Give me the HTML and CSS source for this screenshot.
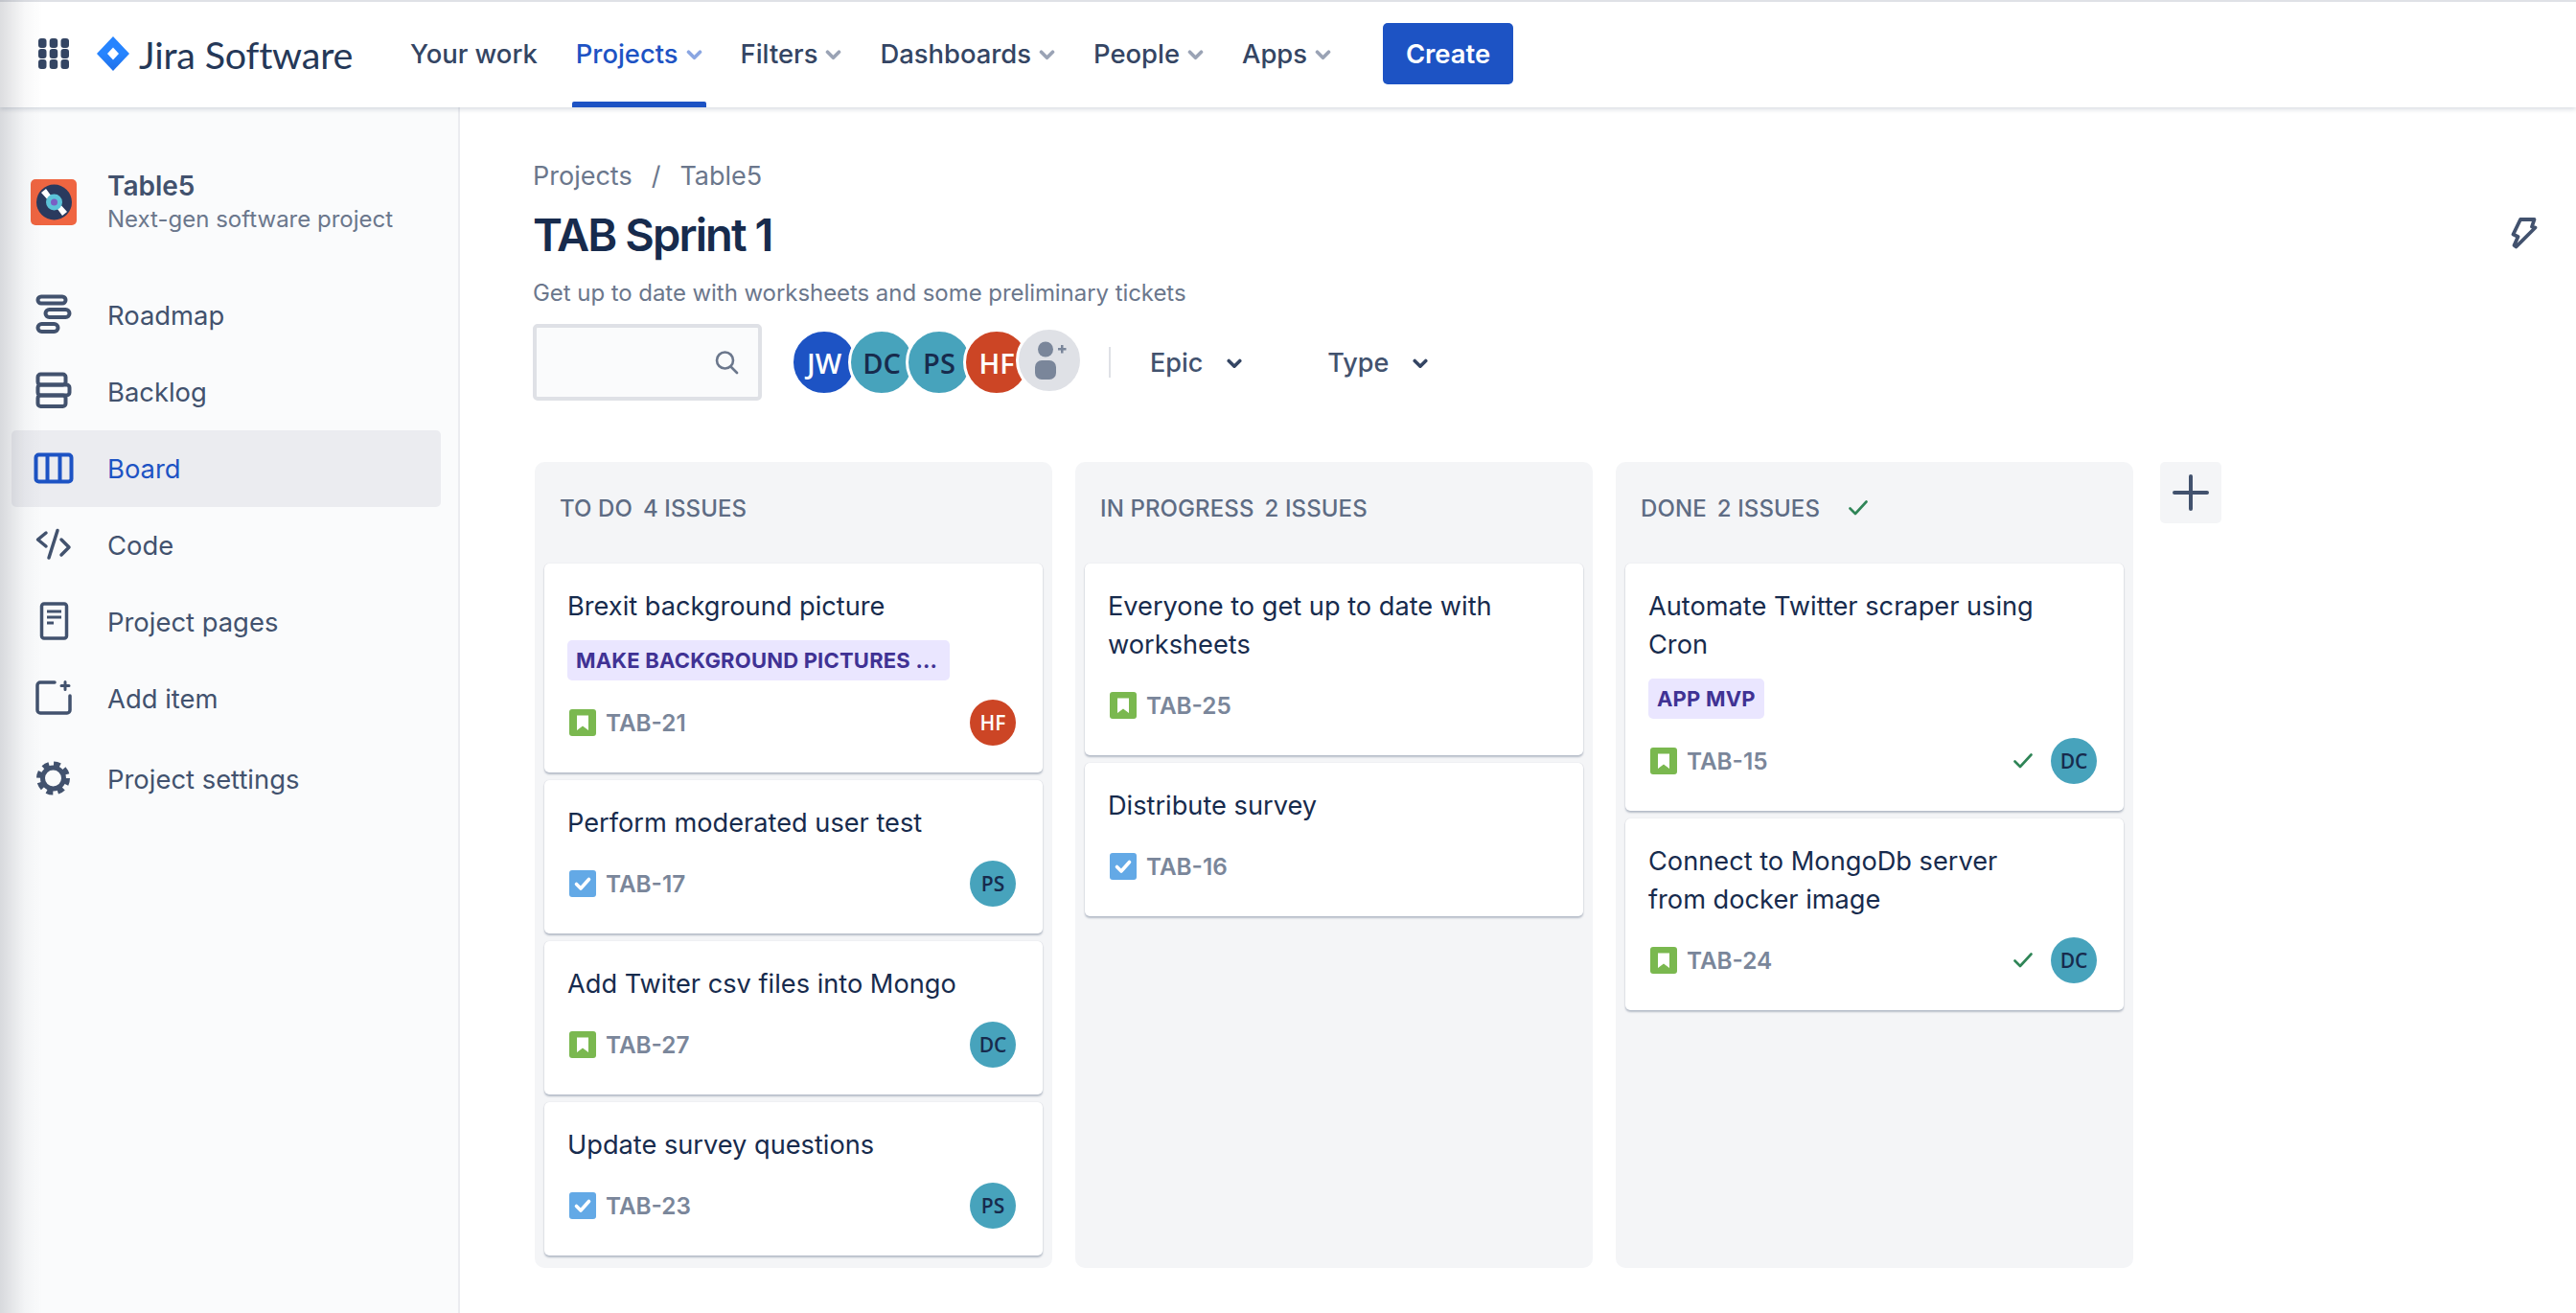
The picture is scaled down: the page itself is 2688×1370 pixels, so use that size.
FILE: index.html
```html
<!DOCTYPE html>
<html lang="en">
<head>
  <meta charset="UTF-8">
  <title>TAB Sprint 1 - Board</title>
  <link rel="stylesheet" href="styles.css">
</head>
<body>
  <svg class="sprite" width="0" height="0">
    <symbol id="chev" viewBox="0 0 18 12"><path d="M2.500 2.500 9 9l6.500-6.500" fill="none" stroke="currentColor" stroke-width="4" stroke-linecap="round" stroke-linejoin="round"/></symbol>
    <symbol id="story" viewBox="0 0 28 28"><rect width="28" height="28" rx="3" fill="#7ab84f"/><path d="M8 6.500h12v15.500l-6-4.500-6 4.500z" fill="#fff"/></symbol>
    <symbol id="task" viewBox="0 0 28 28"><rect width="28" height="28" rx="3" fill="#63a9e6"/><path d="M7.500 14.500l4.500 4.500 8.500-9.500" fill="none" stroke="#fff" stroke-width="3.600" stroke-linecap="round" stroke-linejoin="round"/></symbol>
    <symbol id="tick" viewBox="0 0 20 16"><path d="M1.500 8.500 7 14 18.500 1.500" fill="none" stroke="#2f8557" stroke-width="2.600" stroke-linecap="round" stroke-linejoin="round"/></symbol>
  </svg>

  <div class="edge-fade"></div>

  <header class="topbar">
    <svg class="apps-icon" width="32" height="32" viewBox="0 0 32 32" fill="#344563">
      <rect x="0" y="0" width="8.500" height="10" rx="3"/><rect x="11.700" y="0" width="8.500" height="10" rx="3"/><rect x="23.500" y="0" width="8.500" height="10" rx="3"/>
      <rect x="0" y="11" width="8.500" height="10" rx="3"/><rect x="11.700" y="11" width="8.500" height="10" rx="3"/><rect x="23.500" y="11" width="8.500" height="10" rx="3"/>
      <rect x="0" y="22" width="8.500" height="10" rx="3"/><rect x="11.700" y="22" width="8.500" height="10" rx="3"/><rect x="23.500" y="22" width="8.500" height="10" rx="3"/>
    </svg>
    <svg class="logo-mark" width="36" height="36" viewBox="0 0 36 36">
      <defs><linearGradient id="jira-g" x1="0" y1="0" x2="0" y2="1"><stop offset="0.5" stop-color="#2684ff"/><stop offset="1" stop-color="#1f6fe8"/></linearGradient></defs>
      <path d="M18 0 35 18 18 36 1 18z" fill="url(#jira-g)"/>
      <path d="M18 11.500 24 18 18 24.500 12 18z" fill="#fff"/>
    </svg>
    <span class="logo-text">Jira Software</span>
    <nav class="topnav">
      <a class="topnav-item">Your work</a>
      <a class="topnav-item active">Projects <svg class="chev" width="17" height="11"><use href="#chev"/></svg></a>
      <a class="topnav-item">Filters <svg class="chev" width="17" height="11"><use href="#chev"/></svg></a>
      <a class="topnav-item">Dashboards <svg class="chev" width="17" height="11"><use href="#chev"/></svg></a>
      <a class="topnav-item">People <svg class="chev" width="17" height="11"><use href="#chev"/></svg></a>
      <a class="topnav-item">Apps <svg class="chev" width="17" height="11"><use href="#chev"/></svg></a>
    </nav>
    <button class="create-btn">Create</button>
  </header>

  <div class="layout">
    <aside class="sidebar">
      <div class="project">
        <svg class="project-icon" width="48" height="48" viewBox="0 0 48 48">
          <rect width="48" height="48" rx="5" fill="#ef6541"/>
          <circle cx="24.500" cy="24" r="18.500" fill="#2a3a5e"/>
          <path d="M11 14l5-4 8 11-4 3zM38 34l-5 4-8-11 4-3z" fill="#fff"/>
          <circle cx="24.500" cy="24" r="8.500" fill="#5cc3d8"/>
          <circle cx="24.500" cy="24" r="3.500" fill="#7a5ec4"/>
        </svg>
        <div>
          <div class="project-name">Table5</div>
          <div class="project-type">Next-gen software project</div>
        </div>
      </div>
      <nav class="sidenav">
        <a class="sidenav-item">
          <svg width="48" height="48" viewBox="0 0 48 48" fill="none" stroke="currentColor" stroke-width="4"><rect x="7.500" y="4.500" width="29" height="7" rx="3.500"/><rect x="15.500" y="18" width="25" height="8" rx="4"/><rect x="7.500" y="33" width="21" height="8" rx="4"/></svg>
          Roadmap
        </a>
        <a class="sidenav-item">
          <svg width="48" height="48" viewBox="0 0 48 48" fill="none" stroke="currentColor" stroke-width="4" stroke-linejoin="round"><rect x="7.500" y="5.500" width="29" height="11" rx="3"/><rect x="7.500" y="16.500" width="33" height="11" rx="3"/><rect x="7.500" y="27.500" width="29" height="11.500" rx="3"/></svg>
          Backlog
        </a>
        <a class="sidenav-item active">
          <svg width="48" height="48" viewBox="0 0 48 48" fill="none" stroke="currentColor" stroke-width="4"><rect x="5.500" y="9.500" width="37" height="28" rx="3"/><path d="M17.500 9.500v28M30.500 9.500v28"/></svg>
          Board
        </a>
        <a class="sidenav-item">
          <svg width="48" height="48" viewBox="0 0 48 48" fill="none" stroke="currentColor" stroke-width="3.500" stroke-linecap="round" stroke-linejoin="round"><path d="M16 11 7.500 18l8.500 7M28 8.500 19 37M32 18l8 8-8 8"/></svg>
          Code
        </a>
        <a class="sidenav-item">
          <svg width="48" height="48" viewBox="0 0 48 48" fill="none" stroke="currentColor" stroke-width="3.500" stroke-linejoin="round"><rect x="11.500" y="5" width="26" height="36" rx="2.500"/><path d="M17 13h15M17 19h15M17 25h7" stroke-width="3"/></svg>
          Project pages
        </a>
        <a class="sidenav-item">
          <svg width="48" height="48" viewBox="0 0 48 48" fill="none" stroke="currentColor" stroke-width="3.500" stroke-linecap="round" stroke-linejoin="round"><path d="M25 7H10a3 3 0 0 0-3 3v26a3 3 0 0 0 3 3h28a3 3 0 0 0 3-3V21"/><path d="M36 6.500v8M32 10.500h8" stroke-width="3"/></svg>
          Add item
        </a>
        <a class="sidenav-item settings">
          <svg width="48" height="48" viewBox="0 0 48 48" fill="none" stroke="currentColor"><circle cx="23.500" cy="23" r="11" stroke-width="5"/><circle cx="23.500" cy="23" r="15" stroke-width="5" stroke-dasharray="6.800 5"/></svg>
          Project settings
        </a>
      </nav>
    </aside>

    <main class="content">
      <div class="breadcrumbs"><span>Projects</span><span>/</span><span>Table5</span></div>
      <div class="title-row">
        <h1>TAB Sprint 1</h1>
        <svg class="bolt" width="28" height="36" viewBox="0 0 28 36" fill="none" stroke="#42526e" stroke-width="3.800" stroke-linejoin="round" stroke-linecap="round"><path d="M10 3h14.500L22 10.500l3.500 1-20 20-2-1.500 4-9-5-2.500z"/></svg>
      </div>
      <p class="subtitle">Get up to date with worksheets and some preliminary tickets</p>

      <div class="toolbar">
        <div class="search">
          <svg width="26" height="26" viewBox="0 0 26 26" fill="none" stroke="#6b778c" stroke-width="2.600" stroke-linecap="round"><circle cx="11.500" cy="11" r="8.500"/><path d="m18 18 6 6"/></svg>
        </div>
        <div class="people">
          <span class="person blue">JW</span>
          <span class="person teal">DC</span>
          <span class="person teal">PS</span>
          <span class="person red">HF</span>
          <span class="person add">
            <svg width="36" height="40" viewBox="0 0 36 40" fill="#7a869a"><circle cx="14" cy="8.500" r="8"/><rect x="3" y="20" width="22" height="20" rx="7"/><path d="M27 7h3V4h2.500v3h3v2.500h-3v3H30v-3h-3z"/></svg>
          </span>
        </div>
        <span class="divider"></span>
        <button class="filter">Epic <svg width="16" height="11"><use href="#chev"/></svg></button>
        <button class="filter">Type <svg width="16" height="11"><use href="#chev"/></svg></button>
      </div>

      <div class="board">
        <section class="column">
          <h2 class="column-title"><span>To do</span><span>4 issues</span></h2>
          <article class="card">
            <div class="card-title">Brexit background picture</div>
            <span class="epic cut">MAKE BACKGROUND PICTURES ...</span>
            <div class="card-foot"><svg width="28" height="28"><use href="#story"/></svg><span class="key">TAB-21</span><span class="mini red">HF</span></div>
          </article>
          <article class="card">
            <div class="card-title">Perform moderated user test</div>
            <div class="card-foot"><svg width="28" height="28"><use href="#task"/></svg><span class="key">TAB-17</span><span class="mini teal">PS</span></div>
          </article>
          <article class="card">
            <div class="card-title">Add Twiter csv files into Mongo</div>
            <div class="card-foot"><svg width="28" height="28"><use href="#story"/></svg><span class="key">TAB-27</span><span class="mini teal">DC</span></div>
          </article>
          <article class="card">
            <div class="card-title">Update survey questions</div>
            <div class="card-foot"><svg width="28" height="28"><use href="#task"/></svg><span class="key">TAB-23</span><span class="mini teal">PS</span></div>
          </article>
        </section>

        <section class="column">
          <h2 class="column-title"><span>In progress</span><span>2 issues</span></h2>
          <article class="card">
            <div class="card-title">Everyone to get up to date with worksheets</div>
            <div class="card-foot"><svg width="28" height="28"><use href="#story"/></svg><span class="key">TAB-25</span></div>
          </article>
          <article class="card">
            <div class="card-title">Distribute survey</div>
            <div class="card-foot"><svg width="28" height="28"><use href="#task"/></svg><span class="key">TAB-16</span></div>
          </article>
        </section>

        <section class="column">
          <h2 class="column-title"><span>Done</span><span>2 issues</span><svg class="column-tick" width="20" height="16"><use href="#tick"/></svg></h2>
          <article class="card">
            <div class="card-title">Automate Twitter scraper using Cron</div>
            <span class="epic">APP MVP</span>
            <div class="card-foot"><svg width="28" height="28"><use href="#story"/></svg><span class="key">TAB-15</span><svg class="done-tick" width="20" height="16"><use href="#tick"/></svg><span class="mini teal">DC</span></div>
          </article>
          <article class="card">
            <div class="card-title">Connect to MongoDb server from docker image</div>
            <div class="card-foot"><svg width="28" height="28"><use href="#story"/></svg><span class="key">TAB-24</span><svg class="done-tick" width="20" height="16"><use href="#tick"/></svg><span class="mini teal">DC</span></div>
          </article>
        </section>

        <button class="add-column">
          <svg width="38" height="38" viewBox="0 0 38 38" stroke="#42526e" stroke-width="4" stroke-linecap="round"><path d="M19 2v34M2 19h34"/></svg>
        </button>
      </div>
    </main>
  </div>
</body>
</html>
```

FILE: styles.css
```css
* {
  box-sizing: border-box;
}
html, body {
  height: 100%;
}
body {
  margin: 0;
  font-family: Inter, "Liberation Sans", sans-serif;
  color: #172b4d;
  background: #fff;
  overflow: hidden;
}
.sprite {
  display: block;
  height: 0;
}
.edge-fade {
  position: fixed;
  left: 0;
  top: 0;
  bottom: 0;
  width: 44px;
  background: linear-gradient(to right, rgba(40, 45, 60, 0.16), rgba(40, 45, 60, 0.03) 60%, rgba(40, 45, 60, 0));
  pointer-events: none;
  z-index: 5;
}

/* top bar */
.topbar {
  position: relative;
  z-index: 2;
  display: flex;
  align-items: center;
  height: 112px;
  padding-left: 40px;
  box-shadow: inset 0 2px 0 #dfe1e6, 0 2px 5px rgba(9, 30, 66, 0.16);
  background: #fff;
}
.apps-icon {
  flex: none;
}
.logo-mark {
  flex: none;
  margin-left: 28px;
}
.logo-text {
  margin-left: 9px;
  width: 283px;
  font-family: Lato, sans-serif;
  font-size: 39.5px;
  color: #253858;
  letter-spacing: -0.2px;
}
.topnav {
  display: flex;
  align-items: center;
  gap: 40px;
  height: 100%;
}
.topnav-item {
  position: relative;
  display: flex;
  align-items: center;
  gap: 8px;
  height: 100%;
  font-size: 27.4px;
  font-weight: 500;
  color: #344563;
}
.topnav-item .chev {
  color: #9aa3b5;
  margin-top: 3px;
}
.topnav-item.active {
  color: #1d53c4;
}
.topnav-item.active .chev {
  color: #8aa6e2;
}
.topnav-item.active::after {
  content: "";
  position: absolute;
  left: -4px;
  right: -4px;
  bottom: 0;
  height: 6px;
  border-radius: 2px 2px 0 0;
  background: #1d53c4;
}
.create-btn {
  margin-left: 54px;
  width: 136px;
  height: 64px;
  border: none;
  border-radius: 5px;
  background: #1d53c4;
  color: #fff;
  font-family: inherit;
  font-size: 27.4px;
  font-weight: 600;
}

/* page body */
.layout {
  display: flex;
  height: calc(100% - 112px);
}
.sidebar {
  flex: none;
  width: 480px;
  background: #fafbfc;
  border-right: 2px solid #ebecf0;
}
.project {
  display: flex;
  align-items: center;
  gap: 32px;
  padding: 64px 0 0 32px;
}
.project-icon {
  flex: none;
}
.project-name {
  font-size: 28px;
  font-weight: 600;
  line-height: 36px;
  color: #42526e;
}
.project-type {
  font-size: 24px;
  line-height: 34px;
  color: #6b778c;
}
.sidenav {
  margin-top: 43px;
}
.sidenav-item {
  display: flex;
  align-items: center;
  gap: 32px;
  width: 448px;
  height: 80px;
  margin-left: 12px;
  padding-left: 20px;
  border-radius: 5px;
  font-size: 27.4px;
  color: #42526e;
}
.sidenav-item svg {
  flex: none;
}
.sidenav-item.active {
  background: #ebecf0;
  color: #1d53c4;
}
.sidenav-item.settings {
  margin-top: 4px;
}

.content {
  flex: 1;
  min-width: 0;
  padding: 52px 40px 0 76px;
}
.breadcrumbs {
  display: flex;
  gap: 20px;
  font-size: 27px;
  line-height: 40px;
  color: #6b778c;
}
.title-row {
  display: flex;
  align-items: center;
  justify-content: space-between;
  height: 56px;
  margin-top: 12px;
}
.title-row h1 {
  margin: 0;
  font-size: 47px;
  font-weight: 600;
  letter-spacing: -1.9px;
  color: #172b4d;
}
.subtitle {
  margin: 18px 0 0;
  font-size: 24px;
  line-height: 32px;
  letter-spacing: -0.06px;
  color: #6b778c;
}
.toolbar {
  display: flex;
  align-items: center;
  height: 80px;
  margin-top: 16px;
}
.search {
  display: flex;
  align-items: center;
  justify-content: flex-end;
  width: 239px;
  height: 80px;
  padding-right: 20px;
  border: 4px solid #dfe1e6;
  border-radius: 5px;
  background: #fafbfc;
}
.people {
  display: flex;
  align-items: center;
  margin-left: 30px;
}
.person {
  display: flex;
  align-items: center;
  justify-content: center;
  width: 70px;
  height: 70px;
  margin-right: -10px;
  border: 3px solid #fff;
  border-radius: 50%;
  font-family: "Open Sans", sans-serif;
  font-size: 29px;
  font-weight: 600;
}
.person.add {
  margin-left: -5px;
  margin-right: 0;
  margin-bottom: 4px;
  background: #dfe1e6;
}
.blue {
  background: #1d53c4;
  color: #fff;
}
.teal {
  background: #47a3bc;
  color: #172b4d;
}
.red {
  background: #cc4525;
  color: #fff;
}
.divider {
  width: 2px;
  height: 32px;
  margin-left: 27px;
  background: #dfe1e6;
}
.filter {
  display: flex;
  align-items: center;
  gap: 25px;
  padding: 0;
  border: none;
  background: none;
  font-family: inherit;
  font-size: 27px;
  font-weight: 500;
  color: #42526e;
  margin-left: 41px;
}
.filter + .filter {
  margin-left: 89px;
}
.filter svg {
  color: #344563;
  margin-top: 2px;
}

/* board */
.board {
  display: flex;
  align-items: flex-start;
  gap: 24px;
  margin-top: 64px;
  margin-left: 2px;
}
.column {
  flex: none;
  width: 540px;
  height: 841px;
  padding: 0 10px;
  border-radius: 10px;
  background: #f4f5f7;
}
.column-title {
  display: flex;
  align-items: center;
  gap: 11px;
  height: 106px;
  margin: 0;
  padding: 0 0 10px 16px;
  font-size: 24px;
  font-weight: 500;
  letter-spacing: 0.1px;
  text-transform: uppercase;
  color: #5e6c84;
}
.column-tick {
  margin-left: 19px;
}
.card {
  margin-bottom: 8px;
  padding: 25px 24px 28px;
  border-radius: 5px;
  background: #fff;
  box-shadow: 0 2px 2px rgba(9, 30, 66, 0.25), 0 0 1px rgba(9, 30, 66, 0.2);
}
.card-title {
  padding-right: 50px;
  font-size: 27.2px;
  line-height: 40px;
  color: #172b4d;
}
.epic {
  display: table;
  height: 42px;
  margin-top: 15px;
  padding: 0 9px;
  border-radius: 5px;
  background: #eae6ff;
  color: #403294;
  font-size: 22px;
  font-weight: 700;
  letter-spacing: 0.2px;
  line-height: 42px;
}
.epic.cut {
  padding-right: 13px;
}
.card-foot {
  display: flex;
  align-items: center;
  height: 48px;
  margin-top: 19px;
  padding-left: 2px;
}
.epic + .card-foot {
  margin-top: 20px;
}
.key {
  margin-left: 10px;
  margin-right: auto;
  font-size: 24.3px;
  font-weight: 600;
  color: #7a869a;
}
.done-tick {
  margin-right: 19px;
}
.mini {
  display: flex;
  align-items: center;
  justify-content: center;
  width: 48px;
  height: 48px;
  margin-right: 4px;
  border-radius: 50%;
  font-family: "Open Sans", sans-serif;
  font-size: 21px;
  font-weight: 600;
}
.add-column {
  flex: none;
  display: flex;
  align-items: center;
  justify-content: center;
  width: 64px;
  height: 64px;
  margin-left: 4px;
  padding: 0;
  border: none;
  border-radius: 5px;
  background: #f4f5f7;
}
```
